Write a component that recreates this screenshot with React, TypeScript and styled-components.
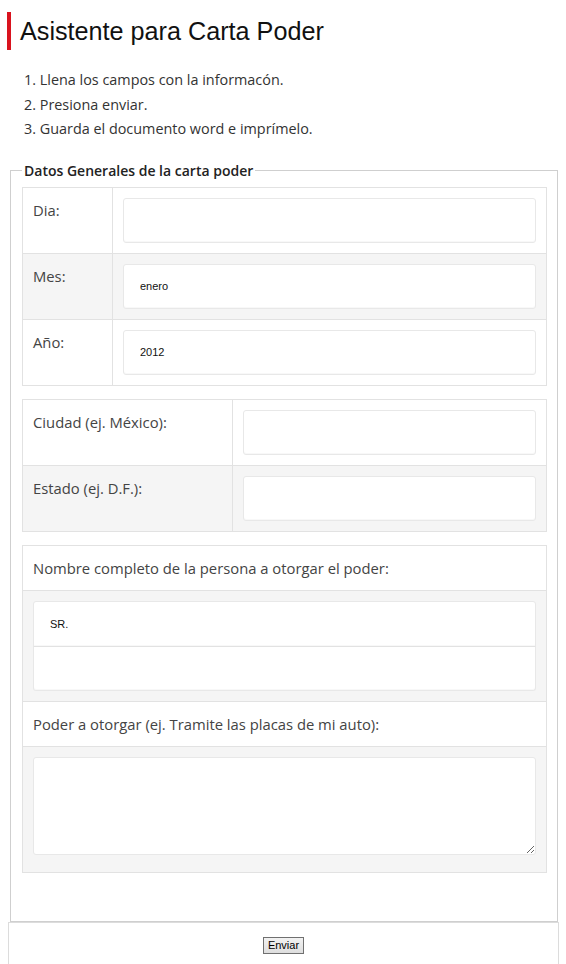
import React from "react";
import styled, { createGlobalStyle } from "styled-components";

const GlobalStyle = createGlobalStyle`
  html, body {
    margin: 0;
    padding: 0;
    background: #fff;
  }
  body {
    font-family: "Open Sans", "Liberation Sans", sans-serif;
    color: #444;
  }
`;

const Page = styled.div`
  width: 566px;
  min-height: 964px;
  overflow: hidden;
`;

const Title = styled.h1`
  margin: 12px 0 0 7px;
  padding-left: 9px;
  border-left: 4px solid #d9131e;
  font-family: "Liberation Sans", Arial, sans-serif;
  font-weight: 400;
  font-size: 25.2px;
  line-height: 38px;
  color: #111;
`;

const Steps = styled.ol`
  margin: 18px 0 0;
  padding: 0 0 0 24px;
  list-style-position: inside;
  font-size: 14.4px;
  line-height: 24.5px;
  color: #333;
`;

const Fieldset = styled.fieldset`
  margin: 20px 8px 0 10px;
  padding: 7px 10px 48px 11px;
  border: 1px solid #cfcfcf;
  min-width: 0;
`;

const Legend = styled.legend`
  padding: 0 2px;
  font-size: 14px;
  line-height: 18px;
  font-weight: 600;
  color: #222;
`;

const Table = styled.table`
  width: 100%;
  border-collapse: collapse;
  border: 1px solid #e2e2e2;
  margin-bottom: 13px;
  table-layout: fixed;

  &:last-child {
    margin-bottom: 0;
  }
`;

const Row = styled.tr<{ $shade?: boolean }>`
  background: ${(p) => (p.$shade ? "#f5f5f5" : "#fff")};
  border-top: 1px solid #e2e2e2;
`;

const Label = styled.td<{ $width?: number }>`
  width: ${(p) => (p.$width ? `${p.$width}px` : "auto")};
  padding: 12px 10px 12px 10px;
  vertical-align: top;
  font-size: 14.8px;
  line-height: 20px;
  color: #444;
  border-right: 1px solid #e2e2e2;
`;

const FullLabel = styled.td`
  padding: 12px 10px;
  font-size: 14.8px;
  line-height: 20px;
  color: #444;
`;

const Cell = styled.td`
  padding: 10px;
  vertical-align: top;
`;

const Input = styled.input`
  display: block;
  box-sizing: border-box;
  width: 100%;
  height: 45px;
  margin: 0;
  padding: 0 16px;
  border: 1px solid #e8e8e8;
  border-radius: 3px;
  background: #fff;
  box-shadow: inset 0 -1px 1px rgba(0, 0, 0, 0.03);
  font-family: "Liberation Sans", Arial, sans-serif;
  font-size: 11px;
  color: #111;
  outline: none;
`;

const StackInput = styled(Input)<{ $pos: "top" | "bottom" }>`
  border-radius: ${(p) => (p.$pos === "top" ? "3px 3px 0 0" : "0 0 3px 3px")};
  height: ${(p) => (p.$pos === "top" ? "46px" : "45px")};
  border-top-color: ${(p) => (p.$pos === "bottom" ? "#e2e2e2" : "#e8e8e8")};
  margin-top: ${(p) => (p.$pos === "bottom" ? "-1px" : "0")};
`;

const TextArea = styled.textarea`
  display: block;
  box-sizing: border-box;
  width: 100%;
  height: 98px;
  margin: 0 0 7px;
  padding: 8px 16px;
  border: 1px solid #e8e8e8;
  border-radius: 3px;
  background: #fff;
  font-family: "Liberation Sans", Arial, sans-serif;
  font-size: 11px;
  outline: none;
`;

const Footer = styled.div`
  margin: 0 7px 0 8px;
  height: 60px;
  border: 1px solid #dcdcdc;
  border-bottom: none;
  display: flex;
  justify-content: center;
  padding-top: 14px;
  box-sizing: border-box;
`;

const SubmitButton = styled.button`
  height: 17px;
  padding: 0 4px;
  border: 1px solid #707070;
  border-radius: 0;
  background: linear-gradient(#f2f2f2, #dedede);
  font-family: "Liberation Sans", Arial, sans-serif;
  font-size: 11px;
  line-height: 15px;
  color: #000;
`;

const App: React.FC = () => {
  return (
    <Page>
      <GlobalStyle />
      <Title>Asistente para Carta Poder</Title>
      <Steps>
        <li>Llena los campos con la informacón.</li>
        <li>Presiona enviar.</li>
        <li>Guarda el documento word e imprímelo.</li>
      </Steps>

      <Fieldset>
        <Legend>Datos Generales de la carta poder</Legend>

        <Table>
          <tbody>
            <Row>
              <Label $width={69}>Dia:</Label>
              <Cell><Input /></Cell>
            </Row>
            <Row $shade>
              <Label $width={69}>Mes:</Label>
              <Cell><Input defaultValue="enero" /></Cell>
            </Row>
            <Row>
              <Label $width={69}>Año:</Label>
              <Cell><Input defaultValue="2012" /></Cell>
            </Row>
          </tbody>
        </Table>

        <Table>
          <tbody>
            <Row>
              <Label $width={189}>Ciudad (ej. México):</Label>
              <Cell><Input /></Cell>
            </Row>
            <Row $shade>
              <Label $width={189}>Estado (ej. D.F.):</Label>
              <Cell><Input /></Cell>
            </Row>
          </tbody>
        </Table>

        <Table>
          <tbody>
            <Row>
              <FullLabel>Nombre completo de la persona a otorgar el poder:</FullLabel>
            </Row>
            <Row $shade>
              <Cell>
                <StackInput $pos="top" defaultValue="SR." />
                <StackInput $pos="bottom" />
              </Cell>
            </Row>
            <Row>
              <FullLabel>Poder a otorgar (ej. Tramite las placas de mi auto):</FullLabel>
            </Row>
            <Row $shade>
              <Cell><TextArea /></Cell>
            </Row>
          </tbody>
        </Table>
      </Fieldset>

      <Footer>
        <SubmitButton type="button">Enviar</SubmitButton>
      </Footer>
    </Page>
  );
};

export default App;
